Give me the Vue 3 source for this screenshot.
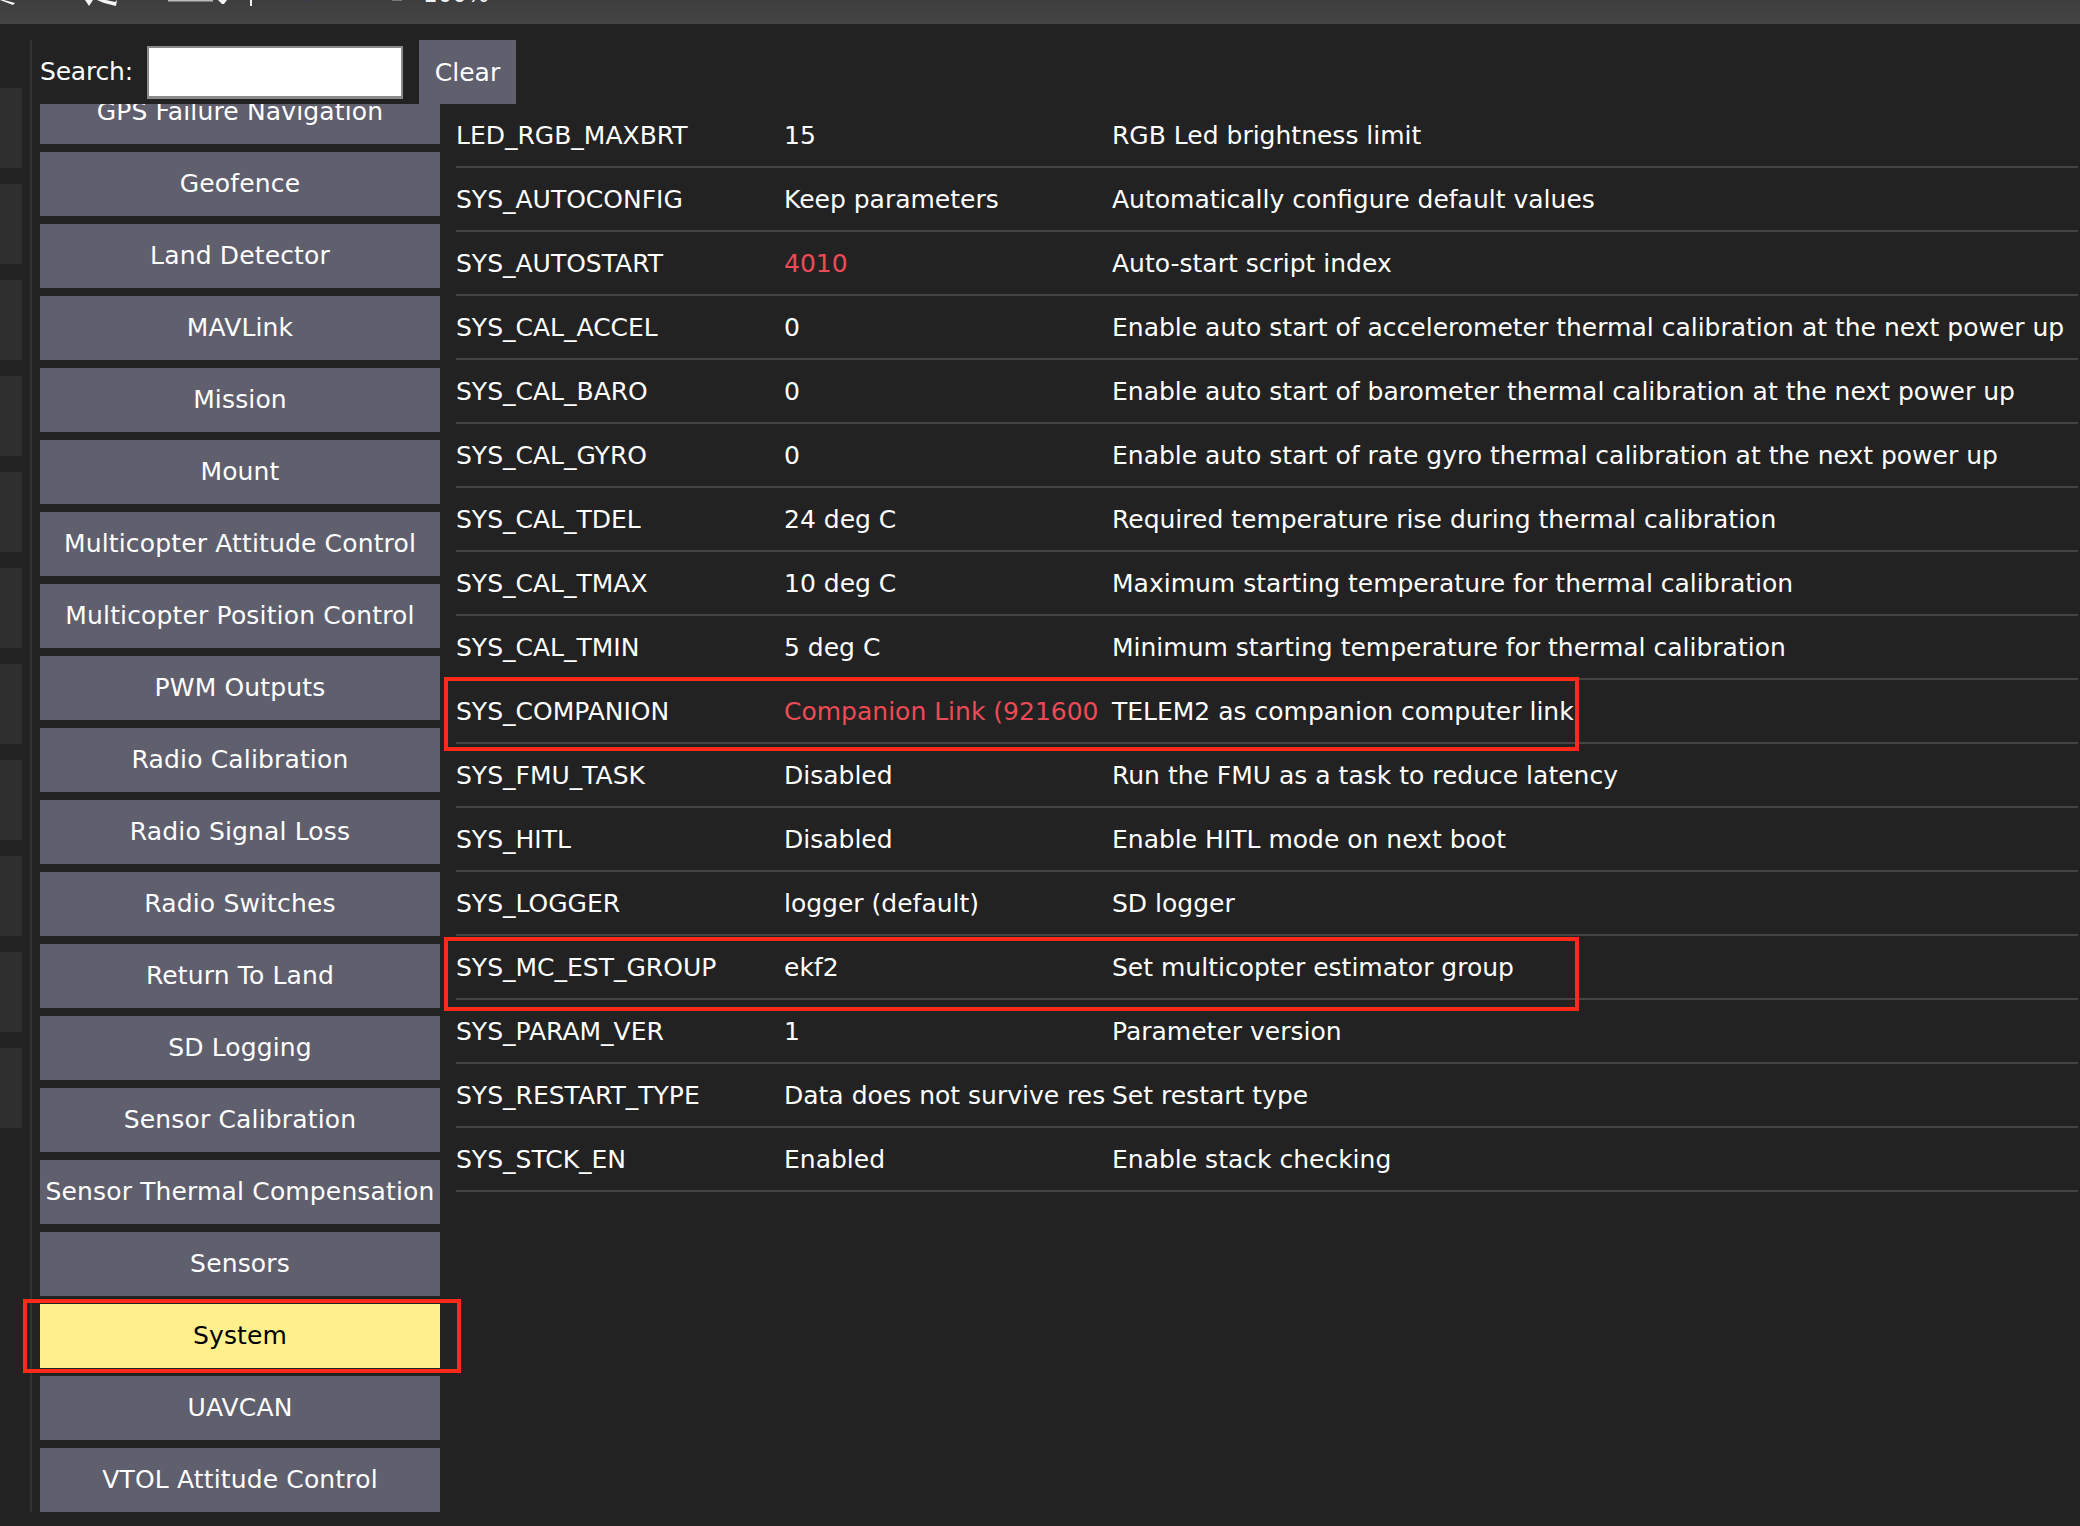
<template>
  <div class="page">
    <div class="topbar">
      <svg class="toolbar-icons" width="520" height="24" viewBox="0 0 520 24">
        <path d="M4 0 L15 3 L13 5 L0 0 Z" fill="#f4f4f4" />
        <path d="M85 0 H93 L89 6 Z" fill="#f4f4f4" />
        <path d="M97 0 H106 L115 2 L117 0 L116 6 L104 3 Z" fill="#f4f4f4" />
        <rect x="168" y="0" width="45" height="1.5" fill="#bcbcbc" />
        <path d="M218 0 H227 L224 4 H222 Z" fill="#f4f4f4" />
        <rect x="250" y="0" width="2" height="6" fill="#f4f4f4" />
        <rect x="307" y="0" width="4" height="1" fill="#3a3a55" />
        <rect x="392" y="0" width="10" height="1" fill="#777777" />
        <text x="423" y="2" class="zoom-label">100%</text>
      </svg>
    </div>

    <div class="body">
      <div class="tabs">
        <div v-for="(tab, i) in tabs" :key="i" class="tab">{{ tab }}</div>
      </div>

      <div class="rule"></div>

      <div class="groups">
        <div class="search">
          <label for="search">Search:</label>
          <input id="search" type="text" />
          <button type="button" class="clear">Clear</button>
        </div>
        <div class="group-list">
          <button
            v-for="g in groups"
            :key="g"
            type="button"
            class="group"
            :class="{ active: g === 'System' }"
          >{{ g }}</button>
        </div>
      </div>

      <table class="params">
        <tbody>
          <tr v-for="p in params" :key="p.name">
            <td class="c-name">{{ p.name }}</td>
            <td class="c-value" :class="{ changed: p.changed }">{{ p.value }}</td>
            <td class="c-desc">{{ p.desc }}</td>
          </tr>
        </tbody>
      </table>
    </div>

    <!-- red boxes drawn over the screenshot -->
    <div class="mark mark-system"></div>
    <div class="mark mark-companion"></div>
    <div class="mark mark-group"></div>
  </div>
</template>

<script setup>
const tabs = ['', '', '', '', '', '', '', '', '', '', '']

const groups = [
  'GPS Failure Navigation',
  'Geofence',
  'Land Detector',
  'MAVLink',
  'Mission',
  'Mount',
  'Multicopter Attitude Control',
  'Multicopter Position Control',
  'PWM Outputs',
  'Radio Calibration',
  'Radio Signal Loss',
  'Radio Switches',
  'Return To Land',
  'SD Logging',
  'Sensor Calibration',
  'Sensor Thermal Compensation',
  'Sensors',
  'System',
  'UAVCAN',
  'VTOL Attitude Control'
]

const params = [
  { name: 'LED_RGB_MAXBRT', value: '15', desc: 'RGB Led brightness limit' },
  { name: 'SYS_AUTOCONFIG', value: 'Keep parameters', desc: 'Automatically configure default values' },
  { name: 'SYS_AUTOSTART', value: '4010', desc: 'Auto-start script index', changed: true },
  { name: 'SYS_CAL_ACCEL', value: '0', desc: 'Enable auto start of accelerometer thermal calibration at the next power up' },
  { name: 'SYS_CAL_BARO', value: '0', desc: 'Enable auto start of barometer thermal calibration at the next power up' },
  { name: 'SYS_CAL_GYRO', value: '0', desc: 'Enable auto start of rate gyro thermal calibration at the next power up' },
  { name: 'SYS_CAL_TDEL', value: '24 deg C', desc: 'Required temperature rise during thermal calibration' },
  { name: 'SYS_CAL_TMAX', value: '10 deg C', desc: 'Maximum starting temperature for thermal calibration' },
  { name: 'SYS_CAL_TMIN', value: '5 deg C', desc: 'Minimum starting temperature for thermal calibration' },
  { name: 'SYS_COMPANION', value: 'Companion Link (921600', desc: 'TELEM2 as companion computer link', changed: true },
  { name: 'SYS_FMU_TASK', value: 'Disabled', desc: 'Run the FMU as a task to reduce latency' },
  { name: 'SYS_HITL', value: 'Disabled', desc: 'Enable HITL mode on next boot' },
  { name: 'SYS_LOGGER', value: 'logger (default)', desc: 'SD logger' },
  { name: 'SYS_MC_EST_GROUP', value: 'ekf2', desc: 'Set multicopter estimator group' },
  { name: 'SYS_PARAM_VER', value: '1', desc: 'Parameter version' },
  { name: 'SYS_RESTART_TYPE', value: 'Data does not survive res', desc: 'Set restart type' },
  { name: 'SYS_STCK_EN', value: 'Enabled', desc: 'Enable stack checking' }
]
</script>

<style>
html, body {
  margin: 0;
  background: #222222;
}
</style>

<style scoped>
.page {
  position: relative;
  width: 2080px;
  height: 1526px;
  overflow: hidden;
  background: #222222;
  color: #ffffff;
  font-family: "DejaVu Sans", sans-serif;
  font-size: 25px;
}

.topbar {
  height: 24px;
  background: linear-gradient(#3e3e3e, #444444);
}

.toolbar-icons {
  display: block;
}

.zoom-label {
  font-size: 23px;
  fill: #f4f4f4;
}

.body {
  display: flex;
  align-items: flex-start;
  padding-top: 16px;
}

.tabs {
  width: 22px;
  margin-top: 48px;
  display: flex;
  flex-direction: column;
  gap: 16px;
  flex: none;
}

.tab {
  height: 80px;
  background: #2f2f2f;
}

.rule {
  width: 2px;
  height: 1472px;
  margin-left: 8px;
  background: #333333;
  flex: none;
}

.groups {
  width: 400px;
  height: 1472px;
  margin-left: 8px;
  flex: none;
  position: relative;
}

.search {
  position: relative;
  z-index: 1;
  width: 379px;
  height: 64px;
  background: #222222;
  display: flex;
  align-items: flex-start;
}

.search label {
  width: 107px;
  line-height: 64px;
  letter-spacing: -0.2px;
  flex: none;
}

.search input {
  width: 256px;
  height: 53px;
  box-sizing: border-box;
  background: #ffffff;
  border: 2px solid #8a8a8a;
  border-bottom-width: 3px;
  margin: 6px 0 0;
  padding: 0;
  flex: none;
}

.clear {
  margin-left: 16px;
  width: 97px;
  height: 64px;
  flex: none;
  border: 0;
  padding: 0;
  background: #605f6e;
  color: #ffffff;
  font: inherit;
}

.group-list {
  margin-top: -24px;
  display: flex;
  flex-direction: column;
  gap: 8px;
}

.group {
  height: 64px;
  border: 0;
  padding: 0 0 1px;
  background: #605f6e;
  color: #ffffff;
  font: inherit;
  letter-spacing: 0.15px;
  white-space: nowrap;
}

.group.active {
  background: #fff08c;
  color: #000000;
}

.params {
  margin: 64px 0 0 16px;
  flex: none;
  border-collapse: collapse;
  table-layout: fixed;
  width: 1622px;
}

.params td {
  height: 62px;
  padding: 0;
  border-bottom: 2px solid #444444;
  white-space: nowrap;
}

.c-name {
  width: 328px;
}

.c-value {
  width: 328px;
}

.c-value.changed {
  color: #ee4a55;
}

.mark {
  position: absolute;
  box-sizing: border-box;
  border: 4px solid #ff2a1a;
}

.mark-system {
  left: 23px;
  top: 1299px;
  width: 438px;
  height: 74px;
}

.mark-companion {
  left: 444px;
  top: 677px;
  width: 1135px;
  height: 74px;
}

.mark-group {
  left: 444px;
  top: 937px;
  width: 1135px;
  height: 74px;
}
</style>
